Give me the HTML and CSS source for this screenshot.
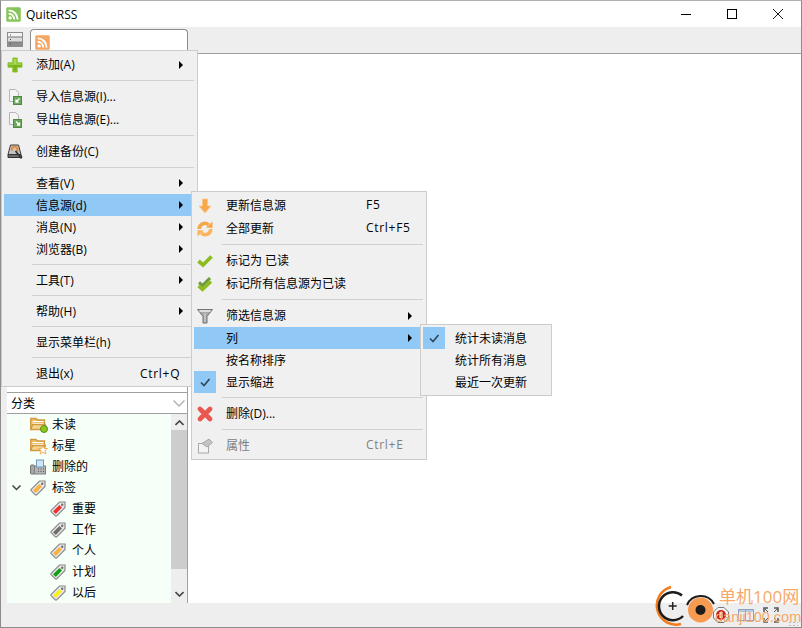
FILE: index.html
```html
<!doctype html>
<html>
<head>
<meta charset="utf-8">
<title>QuiteRSS</title>
<link rel="stylesheet" href="styles.css">
</head>
<body>

<svg class="defs" width="0" height="0">
  <symbol id="rss" viewBox="0 0 16 16">
    <rect x="0.5" y="0.5" width="15" height="15" rx="1.5" fill="currentColor" stroke="currentColor" stroke-opacity=".55"/>
    <circle cx="4.4" cy="11.6" r="1.8" fill="#fff"/>
    <path d="M2.8 7.2a6 6 0 0 1 6 6M2.8 3.6a9.6 9.6 0 0 1 9.6 9.6" fill="none" stroke="#fff" stroke-width="2"/>
  </symbol>
  <symbol id="plus" viewBox="0 0 16 16">
    <path d="M5.800 1h4.400v4.800H15v4.400h-4.800V15H5.800v-4.800H1V5.800h4.800z" fill="#78b41c" stroke="#8fc63a" stroke-linejoin="round"/>
    <path d="M6.500 2h3v4.500h-3zM2 6.500h12v1.200H2z" fill="#a8d856"/>
  </symbol>
  <symbol id="doc-in" viewBox="0 0 16 16">
    <path d="M2.500 .5h6l3 3v9h-9z" fill="#f4f4f4" stroke="#b4b4b4"/>
    <rect x="6.500" y="7.500" width="8" height="8" fill="#6aa85a" stroke="#4f8a3e"/>
    <path d="M12.500 9.500l-3.500 3.500M9 10.500V13h2.500" fill="none" stroke="#fff" stroke-width="1.300"/>
  </symbol>
  <symbol id="doc-out" viewBox="0 0 16 16">
    <path d="M2.500 .5h6l3 3v9h-9z" fill="#f4f4f4" stroke="#b4b4b4"/>
    <rect x="6.500" y="7.500" width="8" height="8" fill="#6aa85a" stroke="#4f8a3e"/>
    <path d="M9 9.500l3.500 3.500M12.500 10.500V13H10" fill="none" stroke="#fff" stroke-width="1.300"/>
  </symbol>
  <symbol id="backup" viewBox="0 0 16 16">
    <path d="M3.500 1h8l2.500 9.500H1z" fill="#c6c2bc" stroke="#3c3c3c"/>
    <path d="M1 10.500h13l1 3H1z" fill="#6c6c6c" stroke="#333"/>
    <path d="M5 6.500a2.800 2.800 0 1 1 4 1.500" fill="none" stroke="#ea8a2c" stroke-width="1.800"/>
    <path d="M8.500 7l6 7.500" stroke="#333" stroke-width="1.600"/>
  </symbol>
  <symbol id="arrow-down" viewBox="0 0 16 16">
    <path d="M5.500 1h5v7h3.500L8 15 2 8h3.500z" fill="#f6a84a" stroke="#fbc683" stroke-width=".8"/>
  </symbol>
  <symbol id="refresh" viewBox="0 0 16 16">
    <path d="M2.300 8a5.500 5.500 0 0 1 9.200-4.200" fill="none" stroke="#f6a648" stroke-width="3.600"/>
    <path d="M9 6.500L15.500 7V.5z" fill="#f6a648"/>
    <path d="M13.700 8a5.500 5.500 0 0 1-9.200 4.200" fill="none" stroke="#fab45e" stroke-width="3.600"/>
    <path d="M7 9.500L.5 9v6.500z" fill="#fab45e"/>
  </symbol>
  <symbol id="check" viewBox="0 0 16 16">
    <path d="M1.500 8L6 12l8.500-8.500" fill="none" stroke="#8cbc1e" stroke-width="3.800"/>
  </symbol>
  <symbol id="check-all" viewBox="0 0 16 16">
    <path d="M2 6.500L5.500 9.500l7.500-7.500" fill="none" stroke="#6f9a3a" stroke-width="3"/>
    <path d="M1.500 10L5.500 13.500l8.500-8" fill="none" stroke="#8cbc1e" stroke-width="3.400"/>
  </symbol>
  <symbol id="funnel" viewBox="0 0 16 16">
    <path d="M.5 1.500h15L10 8.500V15H6V8.500z" fill="#a8a8a8" stroke="#747474"/>
    <path d="M2.500 3h11" stroke="#efefef" stroke-width="1.500"/>
    <path d="M8 5v9" stroke="#d8d8d8"/>
  </symbol>
  <symbol id="tick" viewBox="0 0 16 16">
    <path d="M4 8.500L7 11.500 12.500 5" fill="none" stroke="#2e4a5f" stroke-width="1.700"/>
  </symbol>
  <symbol id="cross" viewBox="0 0 16 16">
    <path d="M3 3l10 10M13 3L3 13" fill="none" stroke="#e9584f" stroke-width="4.600" stroke-linecap="round"/>
  </symbol>
  <symbol id="props" viewBox="0 0 16 16">
    <rect x="1.500" y="5.500" width="10" height="9.500" fill="#f4f4f4" stroke="#a8a8a8"/>
    <path d="M5 5.500L12 1l3.500 3.500L10 9z" fill="#c4c4c4" stroke="#a8a8a8"/>
  </symbol>
  <symbol id="folder" viewBox="0 0 16 16">
    <path d="M.7 1.500h5.300l1.500 1.500h7v9H.7z" fill="#efbf6a" stroke="#d09a42" stroke-width="1.300"/>
    <path d="M2.500 4.500h11M2.500 6.500h11" stroke="#fff" stroke-width="1.200"/>
    <path d="M.7 12.500l2-5h12.800l-2 5z" fill="#f6d48e" stroke="#d09a42" stroke-width="1.300"/>
  </symbol>
  <symbol id="star" viewBox="0 0 10 10">
    <path d="M5 .5l1.300 3h3.200L7 5.600 8 9 5 7.200 2 9l1-3.400L.5 3.500h3.200z" fill="#fff" stroke="#f0a040" stroke-width=".8"/>
  </symbol>
  <symbol id="fax" viewBox="0 0 16 16">
    <rect x="0.500" y="6" width="4" height="9" rx="1" fill="#a6a6a6" stroke="#777"/>
    <rect x="4.500" y="7" width="11" height="8" fill="#b4b4b4" stroke="#808080"/>
    <rect x="6.500" y="1" width="7" height="7" fill="#cfe4f4" stroke="#6b9cc4"/>
    <path d="M8 10h1M10.500 10h1M13 10h1M8 12.500h1M10.500 12.500h1M13 12.500h1" stroke="#555"/>
  </symbol>
  <symbol id="tag" viewBox="0 0 16 16">
    <path d="M15 1H9.500L1.200 9.300Q.6 10 1.200 10.700L5.300 14.800Q6 15.400 6.700 14.800L15 6.500z" fill="#e8e8e8" stroke="#8a8a8a" stroke-width="1.200"/>
    <path d="M9.500 4L3 10.200 5.800 13l6.200-6.500z" fill="currentColor"/>
    <circle cx="12.200" cy="3.800" r="1.200" fill="#6f6f6f"/>
  </symbol>
</svg>

<div class="window">

  <div class="titlebar">
    <svg class="app-icon rss-green"><use href="#rss"/></svg>
    <span class="app-name">QuiteRSS</span>
    <div class="controls">
      <svg class="ctl" viewBox="0 0 10 10"><path d="M0 5.500h10" stroke="#000"/></svg>
      <svg class="ctl" viewBox="0 0 10 10"><rect x=".5" y=".5" width="9" height="9" fill="none" stroke="#000"/></svg>
      <svg class="ctl" viewBox="0 0 10 10"><path d="M0 0l10 10M10 0L0 10" stroke="#000" stroke-width=".9"/></svg>
    </div>
  </div>

  <div class="toolbar">
    <svg class="layout-btn" viewBox="0 0 16 15">
      <rect x=".5" y=".5" width="15" height="14" fill="#f4f4f4" stroke="#8c8c8c"/>
      <rect x="1" y="5" width="14" height="4.500" fill="#dcdcdc"/>
      <rect x="1" y="10" width="14" height="4" fill="#8d8d8d"/>
      <path d="M1 5h14M1 10h14" stroke="#777"/>
      <path d="M3 3h1M3 7.500h1M3 12h1" stroke="#444"/>
    </svg>
    <div class="tab">
      <svg class="tab-icon rss-orange"><use href="#rss"/></svg>
    </div>
  </div>

  <div class="main">
    <div class="side">
      <div class="side-top"></div>
      <div class="combo">
        <span class="combo-text">分类</span>
        <svg class="combo-arrow" viewBox="0 0 12 7"><path d="M.5 .5L6 6l5.500-5.500" fill="none" stroke="#b4b4b4" stroke-width="1.500"/></svg>
      </div>
      <div class="tree">
        <div class="tree-list">
          <div class="node">
            <span class="twisty"></span>
            <span class="node-icon">
              <svg class="ic"><use href="#folder"/></svg>
              <i class="badge-dot"></i>
            </span>
            <span class="node-text">未读</span>
          </div>
          <div class="node">
            <span class="twisty"></span>
            <span class="node-icon">
              <svg class="ic"><use href="#folder"/></svg>
              <svg class="badge-star"><use href="#star"/></svg>
            </span>
            <span class="node-text">标星</span>
          </div>
          <div class="node">
            <span class="twisty"></span>
            <span class="node-icon"><svg class="ic"><use href="#fax"/></svg></span>
            <span class="node-text">删除的</span>
          </div>
          <div class="node">
            <svg class="twisty" viewBox="0 0 9 6"><path d="M.5 .5l4 4 4-4" fill="none" stroke="#444" stroke-width="1.500"/></svg>
            <span class="node-icon tag-orange"><svg class="ic"><use href="#tag"/></svg></span>
            <span class="node-text">标签</span>
          </div>
          <div class="node child">
            <span class="node-icon tag-red"><svg class="ic"><use href="#tag"/></svg></span>
            <span class="node-text">重要</span>
          </div>
          <div class="node child">
            <span class="node-icon tag-gray"><svg class="ic"><use href="#tag"/></svg></span>
            <span class="node-text">工作</span>
          </div>
          <div class="node child">
            <span class="node-icon tag-orange"><svg class="ic"><use href="#tag"/></svg></span>
            <span class="node-text">个人</span>
          </div>
          <div class="node child">
            <span class="node-icon tag-green"><svg class="ic"><use href="#tag"/></svg></span>
            <span class="node-text">计划</span>
          </div>
          <div class="node child">
            <span class="node-icon tag-yellow"><svg class="ic"><use href="#tag"/></svg></span>
            <span class="node-text">以后</span>
          </div>
        </div>
        <div class="scrollbar">
          <svg class="sb-arrow" viewBox="0 0 9 6"><path d="M.5 5l4-4 4 4" fill="none" stroke="#444" stroke-width="1.600"/></svg>
          <div class="sb-thumb"></div>
          <svg class="sb-arrow" viewBox="0 0 9 6"><path d="M.5 1l4 4 4-4" fill="none" stroke="#444" stroke-width="1.600"/></svg>
        </div>
      </div>
    </div>
    <div class="content"></div>
  </div>

  <div class="statusbar">
    <svg class="st-icon" viewBox="0 0 16 16">
      <path d="M5 .5h6L15.500 5v6L11 15.500H5L.5 11V5z" fill="#f6f6f6" stroke="#777"/>
      <circle cx="8" cy="8" r="5" fill="#c8201c"/>
      <rect x="6.500" y="5" width="3" height="6" fill="#fff"/>
    </svg>
    <svg class="st-icon" viewBox="0 0 16 16">
      <rect x=".5" y="2.500" width="7" height="11" fill="none" stroke="#8aa6c4"/>
      <rect x="7.500" y="2.500" width="8" height="11" fill="none" stroke="#8aa6c4"/>
      <path d="M1 4h6M8 4h7" stroke="#b4cbe2" stroke-width="2"/>
    </svg>
    <svg class="st-icon" viewBox="0 0 16 16">
      <path d="M1 5V1h4M11 1h4v4M15 11v4h-4M5 15H1v-4" fill="none" stroke="#555" stroke-width="1.500"/>
      <path d="M2 2l3 3M14 2l-3 3M14 14l-3-3M2 14l3-3" stroke="#555"/>
    </svg>
    <div class="grip"></div>
  </div>

  <div class="menu menu-main">
    <div class="item"><span class="cell"><svg class="ic"><use href="#plus"/></svg></span><span class="label">添加(A)</span><i class="arrow"></i></div>
    <div class="sep"></div>
    <div class="item"><span class="cell"><svg class="ic"><use href="#doc-in"/></svg></span><span class="label">导入信息源(I)...</span></div>
    <div class="item"><span class="cell"><svg class="ic"><use href="#doc-out"/></svg></span><span class="label">导出信息源(E)...</span></div>
    <div class="sep"></div>
    <div class="item"><span class="cell"><svg class="ic"><use href="#backup"/></svg></span><span class="label">创建备份(C)</span></div>
    <div class="sep"></div>
    <div class="item plain"><span class="cell"></span><span class="label">查看(V)</span><i class="arrow"></i></div>
    <div class="item plain active"><span class="cell"></span><span class="label">信息源(d)</span><i class="arrow"></i></div>
    <div class="item plain"><span class="cell"></span><span class="label">消息(N)</span><i class="arrow"></i></div>
    <div class="item plain"><span class="cell"></span><span class="label">浏览器(B)</span><i class="arrow"></i></div>
    <div class="sep"></div>
    <div class="item plain"><span class="cell"></span><span class="label">工具(T)</span><i class="arrow"></i></div>
    <div class="sep"></div>
    <div class="item plain"><span class="cell"></span><span class="label">帮助(H)</span><i class="arrow"></i></div>
    <div class="sep"></div>
    <div class="item plain"><span class="cell"></span><span class="label">显示菜单栏(h)</span></div>
    <div class="sep"></div>
    <div class="item plain"><span class="cell"></span><span class="label">退出(x)</span><span class="key">Ctrl+Q</span></div>
  </div>

  <div class="menu menu-feeds">
    <div class="item"><span class="cell"><svg class="ic"><use href="#arrow-down"/></svg></span><span class="label">更新信息源</span><span class="key">F5</span></div>
    <div class="item"><span class="cell"><svg class="ic"><use href="#refresh"/></svg></span><span class="label">全部更新</span><span class="key">Ctrl+F5</span></div>
    <div class="sep"></div>
    <div class="item"><span class="cell"><svg class="ic"><use href="#check"/></svg></span><span class="label">标记为 已读</span></div>
    <div class="item"><span class="cell"><svg class="ic"><use href="#check-all"/></svg></span><span class="label">标记所有信息源为已读</span></div>
    <div class="sep"></div>
    <div class="item"><span class="cell"><svg class="ic"><use href="#funnel"/></svg></span><span class="label">筛选信息源</span><i class="arrow"></i></div>
    <div class="item plain active"><span class="cell"></span><span class="label">列</span><i class="arrow"></i></div>
    <div class="item plain"><span class="cell"></span><span class="label">按名称排序</span></div>
    <div class="item plain"><span class="cell checked"><svg class="ic"><use href="#tick"/></svg></span><span class="label">显示缩进</span></div>
    <div class="sep"></div>
    <div class="item"><span class="cell"><svg class="ic"><use href="#cross"/></svg></span><span class="label">删除(D)...</span></div>
    <div class="sep"></div>
    <div class="item disabled"><span class="cell"><svg class="ic"><use href="#props"/></svg></span><span class="label">属性</span><span class="key">Ctrl+E</span></div>
  </div>

  <div class="menu menu-columns">
    <div class="item plain"><span class="cell checked"><svg class="ic"><use href="#tick"/></svg></span><span class="label">统计未读消息</span></div>
    <div class="item plain"><span class="cell"></span><span class="label">统计所有消息</span></div>
    <div class="item plain"><span class="cell"></span><span class="label">最近一次更新</span></div>
  </div>

  <svg class="wm-logo" viewBox="0 0 64 44">
    <path d="M17 3A19 19 0 0 0 27 40" fill="none" stroke="#f27a1a" stroke-width="2.500"/>
    <path d="M28 11.500A14 14 0 1 0 29 32" fill="none" stroke="#1c1c1c" stroke-width="2.500"/>
    <path d="M18.700 18v8M14.700 22h8" stroke="#222" stroke-width="1.500"/>
    <circle cx="46.500" cy="26" r="12.500" fill="#f89a50"/>
    <path d="M33 21A15 15 0 0 1 60 20" fill="none" stroke="#1c1c1c" stroke-width="2"/>
    <circle cx="46.500" cy="26" r="5" fill="#1c1c1c"/>
  </svg>
  <div class="wm-name">单机100网</div>
  <div class="wm-url">danji100.com</div>

</div>

</body>
</html>
```

FILE: styles.css
```css
html,
body {
    margin: 0;
    padding: 0;
}
body {
    font-family: "Open Sans", "Noto Sans CJK SC", sans-serif;
    font-size: 12px;
    color: #000;
    background-color: white;
    overflow: hidden;
}
.defs {
    position: absolute;
}
.ic {
    width: 16px;
    height: 16px;
    display: block;
}

/* window */
.window {
    position: relative;
    box-sizing: border-box;
    width: 802px;
    height: 628px;
    border: 1px solid #8c8c8c;
    border-top-color: #b0b0b0;
    display: flex;
    flex-direction: column;
    overflow: hidden;
}
.titlebar {
    height: 26px;
    flex: none;
    display: flex;
    align-items: center;
    background-color: white;
}
.app-icon {
    width: 15px;
    height: 15px;
    margin-left: 5px;
}
.rss-green {
    color: #86c45a;
}
.rss-orange {
    color: #f5a662;
}
.app-name {
    margin-left: 5px;
}
.controls {
    margin-left: auto;
    margin-right: 18px;
    display: flex;
    gap: 36px;
}
.ctl {
    width: 10px;
    height: 10px;
}

.toolbar {
    box-sizing: border-box;
    height: 27px;
    flex: none;
    display: flex;
    align-items: flex-end;
    background-color: #eeeeee;
    border-bottom: 1px solid #a0a0a0;
}
.layout-btn {
    width: 16px;
    height: 15px;
    margin: 0 0 6px 6px;
}
.tab {
    box-sizing: border-box;
    width: 158px;
    height: 25px;
    margin-left: 7px;
    margin-bottom: -1px;
    background-color: white;
    border: 1px solid #8c8c8c;
    border-bottom: 0;
    border-radius: 4px 4px 0 0;
}
.tab-icon {
    width: 15px;
    height: 15px;
    display: block;
    margin: 5px 0 0 4px;
}

/* sidebar */
.main {
    flex: 1;
    display: flex;
    min-height: 0;
}
.side {
    box-sizing: border-box;
    width: 187px;
    padding-left: 6px;
    background-color: #eeeeee;
    border-right: 1px solid #a0a0a0;
    display: flex;
    flex-direction: column;
}
.side-top {
    flex: 1;
    background-color: white;
}
.combo {
    box-sizing: border-box;
    height: 22px;
    flex: none;
    display: flex;
    align-items: center;
    justify-content: space-between;
    padding: 0 2px 0 4px;
    background-color: white;
    border-top: 1px solid #a0a0a0;
    border-bottom: 1px solid #a0a0a0;
}
.combo-arrow {
    width: 12px;
    height: 7px;
}
.tree {
    height: 189px;
    flex: none;
    display: flex;
    background-color: #f6fff8;
}
.tree-list {
    flex: 1;
}
.node {
    height: 21px;
    display: flex;
    align-items: center;
}
.node.child {
    padding-left: 43px;
}
.node-text {
    margin-bottom: 2px;
}
.twisty {
    width: 9px;
    height: 6px;
    margin-left: 5px;
    margin-right: 9px;
}
.node-icon {
    position: relative;
    width: 16px;
    height: 16px;
    margin-right: 6px;
}
.badge-dot {
    position: absolute;
    right: -2px;
    bottom: 0;
    width: 6px;
    height: 6px;
    border-radius: 50%;
    background-color: #8bc61e;
    border: 1px solid #5c8c10;
}
.badge-star {
    position: absolute;
    right: -2px;
    bottom: -1px;
    width: 10px;
    height: 10px;
}
.tag-red {
    color: #ee3030;
}
.tag-gray {
    color: #6e6e6e;
}
.tag-orange {
    color: #fbb040;
}
.tag-green {
    color: #14a014;
}
.tag-yellow {
    color: #f8ee20;
}
.scrollbar {
    width: 16px;
    flex: none;
    background-color: #eeeeee;
    display: flex;
    flex-direction: column;
    align-items: center;
}
.sb-arrow {
    width: 9px;
    height: 6px;
    margin: 6px 0;
    flex: none;
}
.sb-thumb {
    width: 100%;
    height: 139px;
    margin-top: -2px;
    margin-bottom: 16px;
    background-color: #cdcdcd;
}
.content {
    flex: 1;
    background-color: white;
}

.statusbar {
    height: 24px;
    flex: none;
    display: flex;
    align-items: center;
    justify-content: flex-end;
    gap: 9px;
    padding-right: 3px;
    background-color: #eeeeee;
}
.st-icon {
    width: 16px;
    height: 16px;
}
.grip {
    width: 10px;
    height: 6px;
    align-self: flex-end;
    background-image: radial-gradient(#b8b8b8 1px, transparent 1px);
    background-size: 4px 3px;
}

/* popup menus */
.menu {
    position: absolute;
    box-sizing: border-box;
    padding: 2px;
    background-color: #f0f0f0;
    border: 1px solid #cccccc;
}
.menu-main {
    left: 0;
    top: 49px;
    width: 197px;
}
.menu-feeds {
    left: 190px;
    top: 190px;
    width: 236px;
}
.menu-columns {
    left: 419px;
    top: 323px;
    width: 132px;
}
.item {
    height: 23px;
    display: flex;
    align-items: center;
}
.item.plain {
    height: 22px;
}
.item.active {
    background-color: #90c8f6;
}
.item.disabled {
    color: #808080;
}
.cell {
    width: 22px;
    height: 22px;
    flex: none;
    display: flex;
    align-items: center;
    justify-content: center;
}
.cell.checked {
    background-color: #90c8f6;
}
.label {
    flex: 1;
    margin-left: 10px;
    margin-bottom: 2px;
}
.key {
    width: 55px;
    flex: none;
    margin-bottom: 2px;
    letter-spacing: .7px;
}
.item.plain .label,
.item.plain .key {
    margin-bottom: 0;
}
.menu-feeds .key {
    width: 58px;
}
.arrow {
    flex: none;
    margin-right: 12px;
    border-left: 4px solid #000;
    border-top: 4px solid transparent;
    border-bottom: 4px solid transparent;
}
.sep {
    height: 1px;
    margin: 4px 1px 4px 28px;
    background-color: #d0d0d0;
}

/* watermark */
.wm-logo {
    position: absolute;
    left: 653px;
    top: 583px;
    width: 64px;
    height: 44px;
}
.wm-name {
    position: absolute;
    left: 718px;
    top: 585px;
    font-size: 17px;
    line-height: 22px;
    white-space: nowrap;
    color: #f6a868;
}
.wm-url {
    position: absolute;
    left: 714px;
    top: 607px;
    font-family: "Liberation Sans", sans-serif;
    font-size: 14.5px;
    line-height: 18px;
    white-space: nowrap;
    color: #f6a868;
}
```
